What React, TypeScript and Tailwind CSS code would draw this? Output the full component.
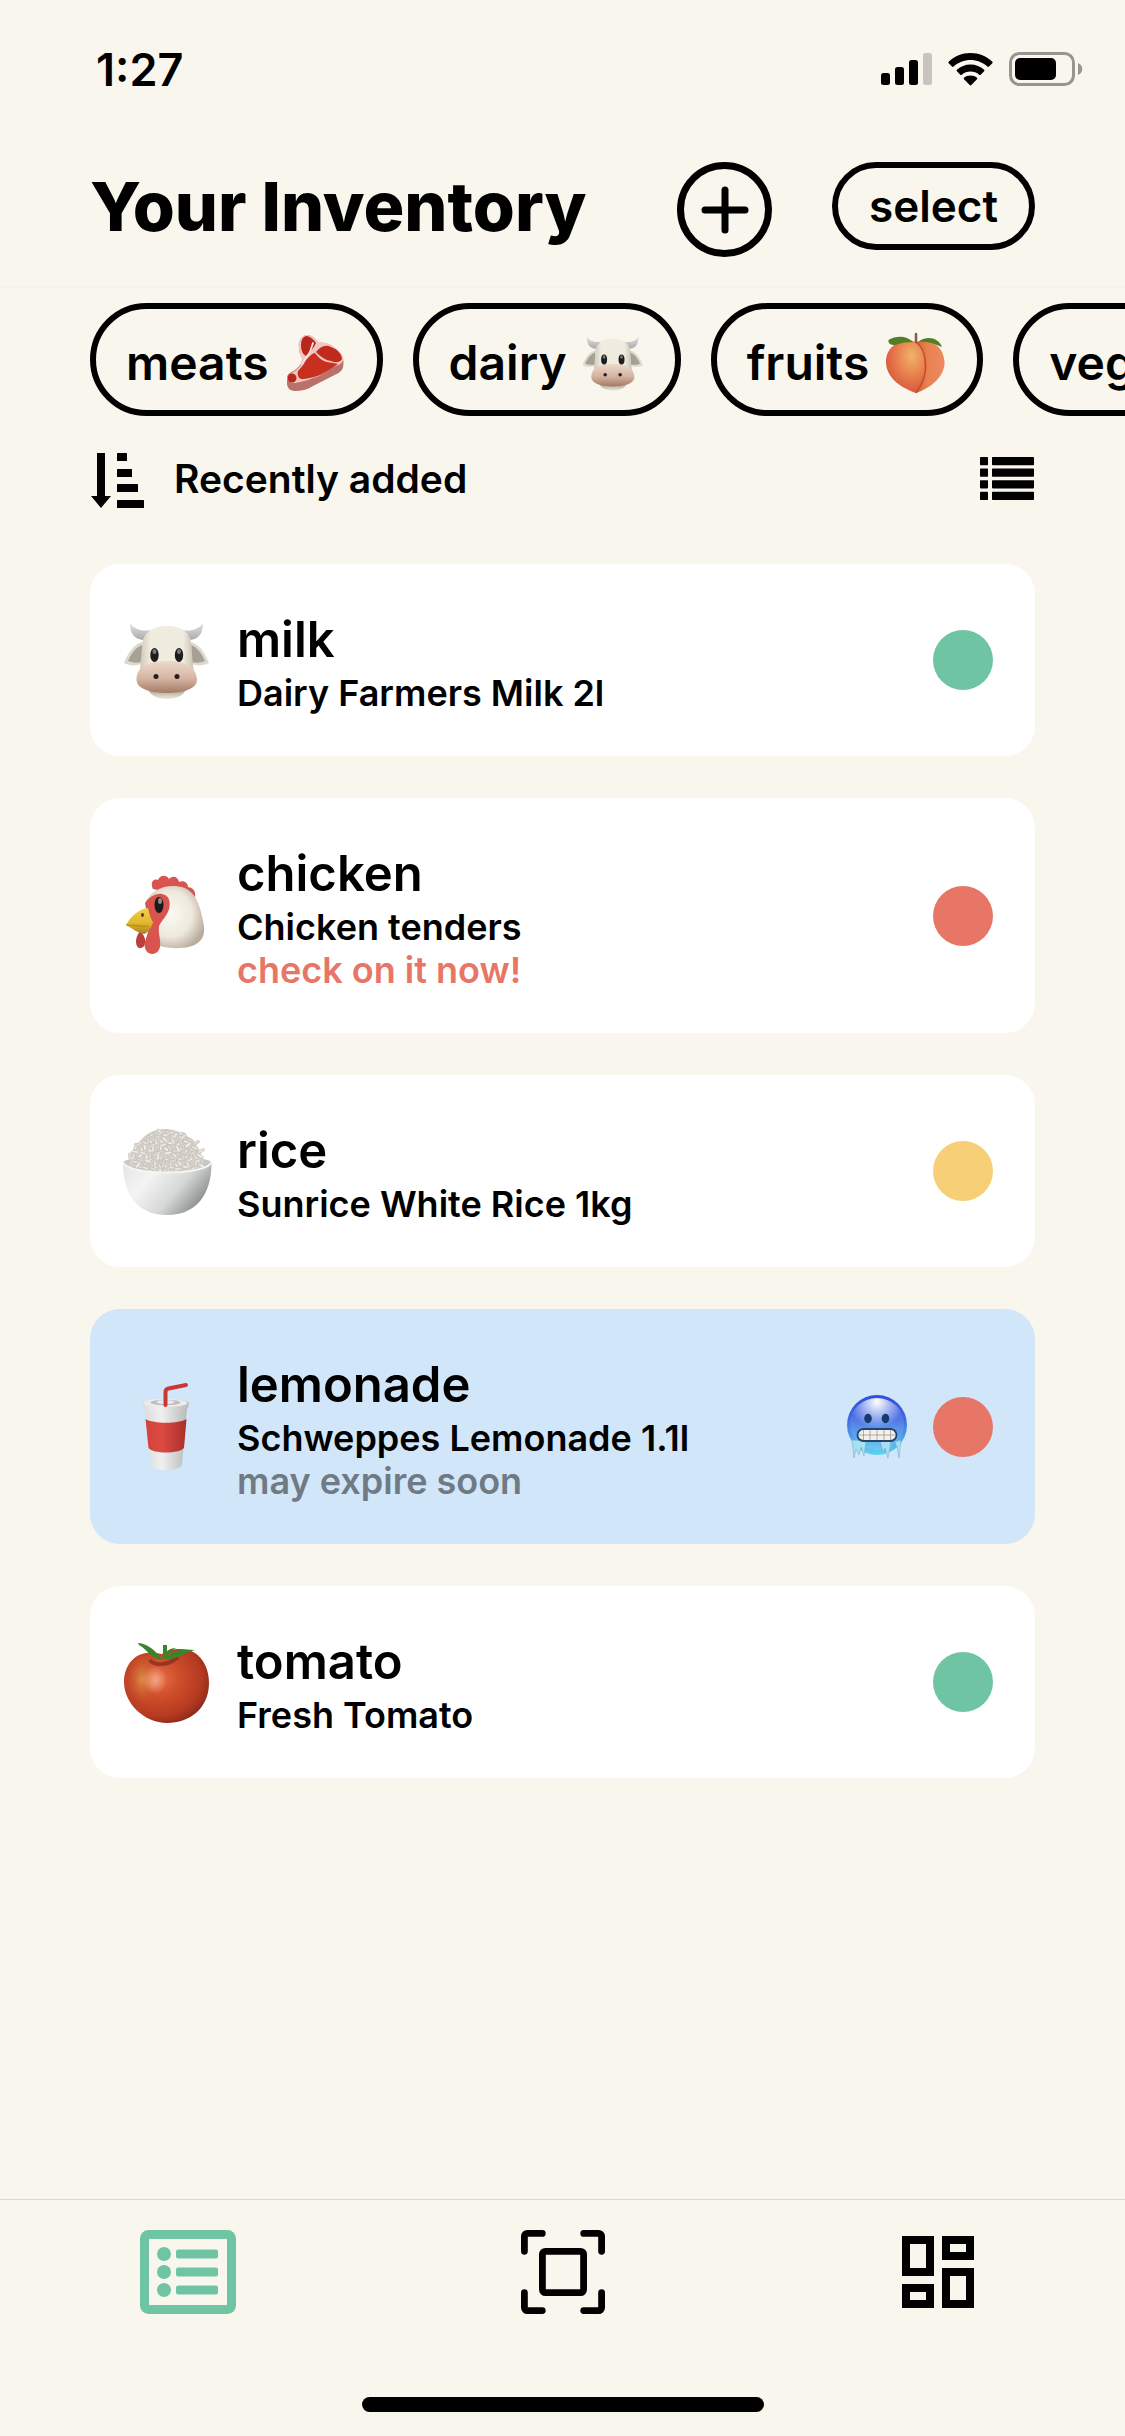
import type { ReactNode } from "react";

/* ---------- Status bar icons ---------- */

function SignalIcon() {
  return (
    <svg width="51" height="33" viewBox="0 0 51 33" aria-hidden="true">
      <rect x="0" y="20" width="9" height="12" rx="2.5" />
      <rect x="14" y="14" width="9" height="18" rx="2.5" />
      <rect x="28" y="7" width="9" height="25" rx="2.5" />
      <rect x="42" y="0" width="9" height="32" rx="2.5" fill="#c7c5be" />
    </svg>
  );
}

function WifiIcon() {
  return (
    <svg width="45" height="33" viewBox="0 0 45 33" aria-hidden="true">
      <path d="M22.5 0C31 0 38.500 3.300 44.300 8.700c.5.500.5 1.100 0 1.600l-3.300 3.300c-.5.500-1.100.5-1.600 0C34.800 9.400 29 7 22.500 7S10.200 9.400 5.600 13.600c-.5.500-1.100.5-1.600 0L.7 10.300c-.5-.5-.5-1.100 0-1.600C6.500 3.300 14 0 22.500 0z" />
      <path d="M22.500 11.500c5.200 0 10 2 13.600 5.200.5.500.5 1.100 0 1.600l-3.400 3.400c-.5.500-1 .5-1.500 0-2.400-2-5.400-3.200-8.700-3.200s-6.300 1.200-8.700 3.200c-.5.500-1 .5-1.500 0l-3.400-3.400c-.5-.5-.5-1.100 0-1.600 3.600-3.200 8.400-5.200 13.600-5.200z" />
      <path d="M22.500 22.500c2.600 0 4.800.8 6.500 2.200.5.500.5 1.100 0 1.600l-5.700 5.800c-.5.500-1.100.5-1.600 0L16 26.300c-.5-.5-.5-1.100 0-1.600 1.700-1.400 3.900-2.200 6.500-2.200z" />
    </svg>
  );
}

function BatteryIcon() {
  return (
    <svg width="74" height="35" viewBox="0 0 74 35" aria-hidden="true">
      <rect x="1.500" y="1.500" width="63" height="31" rx="9" fill="none" stroke="#97958f" strokeWidth="3" />
      <rect x="6" y="6" width="41" height="22" rx="5" />
      <path d="M69 11c2.600 1 4.200 3.300 4.200 6s-1.600 5-4.200 6z" fill="#97958f" />
    </svg>
  );
}

/* ---------- Toolbar icons ---------- */

function PlusIcon() {
  return (
    <svg width="48" height="48" viewBox="0 0 48 48" fill="none" stroke="currentColor" strokeWidth="7" strokeLinecap="round" aria-hidden="true">
      <path d="M24 4v40M4 24h40" />
    </svg>
  );
}

function SortIcon() {
  return (
    <svg width="54" height="59" viewBox="0 0 54 59" aria-hidden="true">
      <path d="M7 4h8v43h6L11 59 1 47h6z" />
      <rect x="27" y="4" width="10" height="8" rx="0.5" />
      <rect x="27" y="20" width="15" height="8" rx="0.5" />
      <rect x="27" y="35" width="21" height="8" rx="0.5" />
      <rect x="27" y="51" width="27" height="8" rx="0.5" />
    </svg>
  );
}

function RowsIcon() {
  return (
    <svg width="55" height="43" viewBox="0 0 55 43" aria-hidden="true">
      {[0, 11.6, 23.2, 34.8].map((y) => (
        <g key={y}>
          <rect x="0" y={y} width="8" height="8.200" rx="0.8" />
          <rect x="12" y={y} width="42" height="8.200" rx="0.8" />
        </g>
      ))}
    </svg>
  );
}

/* ---------- Tab bar icons ---------- */

function ListTabIcon() {
  return (
    <svg width="96" height="84" viewBox="0 0 96 84" fill="currentColor" aria-hidden="true">
      <rect x="4.500" y="4.500" width="87" height="75" rx="4" fill="none" stroke="currentColor" strokeWidth="9" />
      {[24, 42, 60].map((y) => (
        <g key={y}>
          <circle cx="24" cy={y} r="7" />
          <rect x="36" y={y - 4.5} width="42" height="9" rx="2" />
        </g>
      ))}
    </svg>
  );
}

function ScanTabIcon() {
  return (
    <svg width="84" height="84" viewBox="0 0 84 84" fill="none" stroke="currentColor" strokeWidth="6.800" strokeLinecap="round" aria-hidden="true">
      <path d="M3.400 21.300V6.400a3 3 0 0 1 3-3h14.900M62.700 3.400h14.900a3 3 0 0 1 3 3v14.900M80.600 62.700v14.900a3 3 0 0 1-3 3H62.700M21.300 80.600H6.400a3 3 0 0 1-3-3V62.700" />
      <rect x="21.400" y="21.400" width="41.200" height="41.200" rx="3" />
    </svg>
  );
}

function DashboardTabIcon() {
  return (
    <svg width="72" height="72" viewBox="0 0 72 72" fill="none" stroke="currentColor" strokeWidth="8" aria-hidden="true">
      <rect x="4" y="4" width="24" height="32" />
      <rect x="4" y="52" width="24" height="16" />
      <rect x="44" y="4" width="24" height="16" />
      <rect x="44" y="36" width="24" height="32" />
    </svg>
  );
}

/* ---------- Food pictures ---------- */

function Cow({ size }: { size: number }) {
  const id = `cow${size}`;
  return (
    <svg width={size} height={size} viewBox="0 0 90 90" role="img" aria-label="cow">
      <defs>
        <linearGradient id={`${id}head`} x1="0" x2="1">
          <stop offset="0" stopColor="#cfc9bb" />
          <stop offset="0.2" stopColor="#f0ecdf" />
          <stop offset="0.8" stopColor="#f0ecdf" />
          <stop offset="1" stopColor="#c9c3b4" />
        </linearGradient>
        <linearGradient id={`${id}nose`} x1="0" y1="0" x2="0" y2="1">
          <stop offset="0" stopColor="#eddacd" />
          <stop offset="0.55" stopColor="#d5b4a2" />
          <stop offset="1" stopColor="#a47a64" />
        </linearGradient>
        <linearGradient id={`${id}horn`} x1="0" y1="0" x2="0" y2="1">
          <stop offset="0" stopColor="#e4e4e4" />
          <stop offset="1" stopColor="#a9a9a9" />
        </linearGradient>
        <linearGradient id={`${id}chin`} x1="0" y1="0" x2="0" y2="1">
          <stop offset="0.7" stopColor="#bdb6a5" />
          <stop offset="1" stopColor="#eeeadd" />
        </linearGradient>
      </defs>
      <path d="M8 8c0 9 3 16 13 17l8-10C20 17 12 14 8 8zM81 8c0 9-3 16-13 17l-8-10c9 2 17-1 21-7z" fill={`url(#${id}horn)`} />
      <path d="M20 27C11 30 6 38 2 48c5 3 12 3 18 1zM69 27c9 3 14 11 18 21-5 3-12 3-18 1z" fill="#dedacb" />
      <path d="M20 30c-7 3-11 9-14 16 5 2 9 2 14 1zM69 30c7 3 11 9 14 16-5 2-9 2-14 1z" fill="#a5a194" />
      <ellipse cx="45" cy="73" rx="19" ry="11" fill={`url(#${id}chin)`} />
      <path d="M45 11c16 0 24 7 24.500 20 .5 8 1 14 2 24H18c1-10 1.500-16 2-24C20.500 18 29 11 45 11z" fill={`url(#${id}head)`} />
      <path d="M45 46c18 0 29 5 30 18 .7 10-14 14-30 14S14 74 14.500 64C15 51 27 46 45 46z" fill={`url(#${id}nose)`} />
      <ellipse cx="32.500" cy="40" rx="4.200" ry="7" fill="#1c1c1c" />
      <ellipse cx="57" cy="40" rx="4.200" ry="7" fill="#1c1c1c" />
      <ellipse cx="32.500" cy="36.500" rx="2" ry="2.500" fill="#777" />
      <ellipse cx="57" cy="36.500" rx="2" ry="2.500" fill="#777" />
      <circle cx="34" cy="61.500" r="2.500" fill="#2a1c18" />
      <circle cx="55" cy="61.500" r="2.500" fill="#2a1c18" />
    </svg>
  );
}

function Chicken() {
  return (
    <svg width="90" height="90" viewBox="0 0 90 90" role="img" aria-label="chicken">
      <defs>
        <radialGradient id="henHead" cx="0.42" cy="0.45" r="0.62">
          <stop offset="0" stopColor="#fdfaf2" />
          <stop offset="0.6" stopColor="#eee8dd" />
          <stop offset="1" stopColor="#b9ac9c" />
        </radialGradient>
        <linearGradient id="henBeak" x1="0" y1="0" x2="0" y2="1">
          <stop offset="0" stopColor="#f0cf4c" />
          <stop offset="0.55" stopColor="#e3b92f" />
          <stop offset="1" stopColor="#a9811d" />
        </linearGradient>
      </defs>
      <path d="M31 18c-3-6 0-11 5-9 2-5 8-6 11-1 4-4 9-2 10 3 5-2 9 1 9 5 6 1 8 5 7 11z" fill="#d9534f" />
      <path d="M24 31c4-10 15-16 27-16 17 0 24 10 28 26 3 13 6 23-2 30-8 7-24 7-35 5C29 74 25 62 24 50z" fill="url(#henHead)" />
      <path d="M18 60c-4 5-5 11-3 15 2 4 7 2 8-2 1-5-1-9-5-13z" fill="#b9403e" />
      <path d="M23 32c4-6 11-10 17-9 7 1 9 8 7 15-2 7-7 11-10 17-1 8 2 14 1 21-2 9-13 9-15 1-2-7 5-16 4-24z" fill="#d9534f" />
      <path d="M4 54c6-10 13-16 22-17 1 6 3 11 5 14-1 5-5 11-9 12-6-1-11-5-18-9z" fill="url(#henBeak)" />
      <path d="M4 54c8 0 16 2 22 1" fill="none" stroke="#b58a1e" strokeWidth="1.200" />
      <ellipse cx="20.500" cy="44" rx="1.400" ry="2" fill="#59310f" />
      <ellipse cx="37" cy="34" rx="4.500" ry="8" fill="#1b1b1b" />
      <ellipse cx="38" cy="30" rx="2" ry="3" fill="#8a8a8a" />
    </svg>
  );
}

/* Grains are scattered over the mound on a jittered grid. */
const grains = Array.from({ length: 204 }, (_, i) => {
  const row = Math.floor(i / 17);
  const col = i % 17;
  const x = 6 + col * 5 + ((i * 37) % 5);
  const y = 3 + row * 4 + ((i * 23) % 5);
  return { x, y, turn: (i * 67) % 180, shade: i % 3 };
}).filter(({ x, y }) => ((x - 45) / 37) ** 2 + ((y - 38) / 34) ** 2 < 1);

function Rice() {
  return (
    <svg width="90" height="90" viewBox="0 0 90 90" role="img" aria-label="rice">
      <defs>
        <linearGradient id="bowl" x1="0" y1="0" x2="1" y2="0.5">
          <stop offset="0" stopColor="#e2e4e5" />
          <stop offset="0.35" stopColor="#f4f4f4" />
          <stop offset="0.7" stopColor="#d6d7d7" />
          <stop offset="1" stopColor="#8f9192" />
        </linearGradient>
      </defs>
      <path d="M1 36c10-8 78-8 88.500 0L84 46H6z" fill="#c9c7c4" />
      <path d="M7 40c2-13 8-24 16-30C29 5 36 3 43 3c10 0 20 4 27 11 7 7 11 16 12 27L45 50z" fill="#d6d2cb" />
      {grains.map((g, i) => (
        <ellipse
          key={i}
          cx={g.x}
          cy={g.y}
          rx="4"
          ry="1.500"
          fill={["#e9e6e0", "#dedad3", "#f0ede8"][g.shade]}
          stroke="#b9b4ab"
          strokeWidth="0.500"
          transform={`rotate(${g.turn} ${g.x} ${g.y})`}
        />
      ))}
      <path d="M1 36c4 14 84 14 88.500 0 .5 24-9 53-44.500 53S.5 60 1 36z" fill="url(#bowl)" />
      <path d="M1 36c4 14 84 14 88.500 0" fill="none" stroke="#f3f6f7" strokeWidth="2" />
    </svg>
  );
}

function Drink() {
  return (
    <svg width="90" height="90" viewBox="0 0 90 90" role="img" aria-label="cup with straw">
      <defs>
        <linearGradient id="cup" x1="0" x2="1">
          <stop offset="0" stopColor="#dcdcdc" />
          <stop offset="0.4" stopColor="#f0f0f0" />
          <stop offset="1" stopColor="#b9b9b9" />
        </linearGradient>
        <linearGradient id="sleeve" x1="0" x2="1">
          <stop offset="0" stopColor="#d3413c" />
          <stop offset="0.4" stopColor="#dc4a43" />
          <stop offset="1" stopColor="#a92e2b" />
        </linearGradient>
      </defs>
      <path d="M23 26h42l-5 56c-1 8-30 8-31 0z" fill="url(#cup)" />
      <path d="M23.500 37c8 5 33 5 41 0l-2.500 29c-5 6-31 6-35.500 0z" fill="url(#sleeve)" />
      <path d="M20 21c0-5 47-5 47 0l-1 5c-4 6-41 6-45 0z" fill="url(#cup)" />
      <ellipse cx="43.500" cy="21" rx="22" ry="4" fill="#ececec" />
      <ellipse cx="43.500" cy="20.500" rx="15" ry="2.800" fill="#bdbdbd" />
      <ellipse cx="43.500" cy="20" rx="9" ry="2" fill="#e9e9e9" />
      <path d="M43.500 23V10c0-2 1-3 3-3.500L64 3" fill="none" stroke="#cc3733" strokeWidth="4" strokeLinecap="round" strokeLinejoin="round" />
    </svg>
  );
}

function Tomato() {
  return (
    <svg width="90" height="90" viewBox="0 0 90 90" role="img" aria-label="tomato">
      <defs>
        <radialGradient id="tomatoSkin" cx="0.4" cy="0.4" r="0.68">
          <stop offset="0" stopColor="#e8704a" />
          <stop offset="0.35" stopColor="#d04f2c" />
          <stop offset="0.75" stopColor="#b53a20" />
          <stop offset="1" stopColor="#84261a" />
        </radialGradient>
        <radialGradient id="tomatoGlow" cx="0.5" cy="0.5" r="0.5">
          <stop offset="0" stopColor="#dc944a" stopOpacity="0.9" />
          <stop offset="1" stopColor="#c8602c" stopOpacity="0" />
        </radialGradient>
        <radialGradient id="tomatoShine" cx="0.5" cy="0.5" r="0.5">
          <stop offset="0" stopColor="#f3ab88" stopOpacity="0.9" />
          <stop offset="1" stopColor="#f3ab88" stopOpacity="0" />
        </radialGradient>
      </defs>
      <path d="M40 17c8-6 24-7 33-1 9 6 14 17 14 30 0 25-19 40-42 40C22 86 2 66 2 45 2 27 15 10 40 17z" fill="url(#tomatoSkin)" />
      <ellipse cx="20" cy="42" rx="15" ry="24" fill="url(#tomatoGlow)" />
      <ellipse cx="33" cy="43" rx="12" ry="14" fill="url(#tomatoShine)" />
      <path d="M28 23c4 6 18 6 28-3" fill="none" stroke="#74211a" strokeWidth="4" opacity="0.6" />
      <path d="M16 6c7 0 14 5 22 13l2 4c-10 0-14-10-23-15zM41 8h4v12l-4 3zM44 22c5-8 14-11 29-9-10 2-17 10-29 9zM40 20c4-6 8-9 14-9-5 3-8 6-10 11z" fill="#3c8429" />
    </svg>
  );
}

function ColdFace() {
  return (
    <svg width="60" height="64" viewBox="0 0 60 64" role="img" aria-label="frozen">
      <defs>
        <linearGradient id="ice" x1="0" y1="0" x2="0" y2="1">
          <stop offset="0" stopColor="#2e4fdc" />
          <stop offset="0.4" stopColor="#3f68e2" />
          <stop offset="1" stopColor="#5fd4f2" />
        </linearGradient>
        <radialGradient id="iceShine" cx="0.5" cy="0.08" r="0.5">
          <stop offset="0" stopColor="#fff" />
          <stop offset="1" stopColor="#fff" stopOpacity="0.1" />
        </radialGradient>
      </defs>
      <circle cx="30" cy="30" r="30" fill="url(#ice)" />
      <ellipse cx="30" cy="29" rx="27" ry="26" fill="url(#iceShine)" />
      <ellipse cx="21" cy="23.500" rx="3.800" ry="4.700" fill="#173a6e" />
      <ellipse cx="38.500" cy="23.500" rx="3.800" ry="4.700" fill="#173a6e" />
      <path d="M5 45l2 18 2-9 3 6 2-8 3 9 2-15zM33 45l3 12 2-4 3 10 3-17zM48 47l2 5 2 11 2-18z" fill="#a9dff0" stroke="#6eaccb" strokeWidth="0.500" />
      <rect x="10.500" y="34" width="39" height="12" rx="6" fill="#f4f1ec" stroke="#24446b" strokeWidth="1.800" />
      <path d="M11 40h38M16.500 35v10M23 35v10M30 35v10M37 35v10M43.500 35v10" stroke="#9c9895" strokeWidth="0.800" />
    </svg>
  );
}

function Steak() {
  return (
    <svg width="64" height="64" viewBox="-3 -4 64 64" role="img" aria-label="steak">
      <path d="M13 13c-1-6 2-12 8-13 5 0 9 4 11 8 6 0 11 1 15 4 5 4 10 8 10.500 14 0 5 0 9-5 12L27 51c-6 4-12 5-18 5-5 0-8-3-8-8v-6c1-4 5-5 8-7 5-4 8-8 7-12-2-3-3-7-3-10z" fill="#bb716b" />
      <path d="M13 12c-1-6 2-12 8-12 5 0 9 4 11 7 6 0 11 1 15 4 5 4 10 8 10.500 13-1 6-7 6-12 9-6 4-11 8-18 10-6 2-12 4-18 5-4 0-8-1-8.500-5 1-4 5-5 8-7 5-4 8-8 7-12-2-3-3-8-3-12z" fill="#f0c6c1" />
      <path d="M15 10c0-5 2-9 6-9 4 1 7 4 9 7-2 5-6 9-10 13-4-2-5-7-5-11z" fill="#b9261a" />
      <path d="M30 17c4-5 9-8 15-5 6 2 11 7 11 12-2 4-7 4-11 2-6-1-10-4-15-9z" fill="#c02b1d" />
      <path d="M20 25c3-3 6-7 9-7 3 4 7 8 12 9 4 1 8 1 11 2-6 4-12 8-18 11-5 2-13 4-19 4-3-1-4-5-3-8 3-3 6-7 8-11z" fill="#c92f1f" />
      <circle cx="6" cy="43" r="4.500" fill="#b9261a" />
      <path d="M27 8l-3 9-8 12" fill="none" stroke="#f8dfdc" strokeWidth="1.800" strokeLinecap="round" />
    </svg>
  );
}

function Peach() {
  return (
    <svg width="64" height="64" viewBox="-2 -2 64 64" role="img" aria-label="peach">
      <defs>
        <radialGradient id="peachSkin" cx="0.65" cy="0.3" r="0.75">
          <stop offset="0" stopColor="#efb36b" />
          <stop offset="0.5" stopColor="#e87f4d" />
          <stop offset="1" stopColor="#d6523a" />
        </radialGradient>
        <linearGradient id="peachSide" x1="0" x2="1">
          <stop offset="0" stopColor="#cf6236" />
          <stop offset="0.4" stopColor="#ea8250" />
          <stop offset="1" stopColor="#ec8a64" />
        </linearGradient>
      </defs>
      <path d="M31 9c13-4 28 3 28.500 20C60 45 43 56 31 60z" fill="url(#peachSide)" />
      <path d="M31 9C18 4 1 12 1 29c0 17 18 27 30 31 8-11 11-23 9-34-1-8-4-13-9-17z" fill="url(#peachSkin)" />
      <path d="M31 9c5 4 8 9 9 17 2 11-1 23-9 34" fill="none" stroke="#bf4e2f" strokeWidth="1.500" />
      <path d="M3.500 7C12 2 22 3 28 9c-7 0-12 1-18 3-4 0-7-1-6.500-5zM33 9c7-6 20-6 24 5-8-3-14-6-24-5z" fill="#527f26" />
      <path d="M31 1v8" stroke="#8b5a48" strokeWidth="2.500" strokeLinecap="round" />
    </svg>
  );
}

/* ---------- Data ---------- */

const categories: { name: string; picture?: ReactNode }[] = [
  { name: "meats", picture: <Steak /> },
  { name: "dairy", picture: <Cow size={64} /> },
  { name: "fruits", picture: <Peach /> },
  { name: "vegetables" },
];

type Item = {
  name: string;
  detail: string;
  picture: ReactNode;
  dot: string;
  dotLabel: string;
  note?: string;
  noteColor?: string;
  frozen?: boolean;
};

const items: Item[] = [
  { name: "milk", detail: "Dairy Farmers Milk 2l", picture: <Cow size={90} />, dot: "bg-[#6fc5a3]", dotLabel: "fresh" },
  {
    name: "chicken",
    detail: "Chicken tenders",
    picture: <Chicken />,
    dot: "bg-[#e77666]",
    dotLabel: "expired",
    note: "check on it now!",
    noteColor: "text-[#e77666]",
  },
  { name: "rice", detail: "Sunrice White Rice 1kg", picture: <Rice />, dot: "bg-[#f6cf76]", dotLabel: "use soon" },
  {
    name: "lemonade",
    detail: "Schweppes Lemonade 1.1l",
    picture: <Drink />,
    dot: "bg-[#e77666]",
    dotLabel: "expired",
    note: "may expire soon",
    noteColor: "text-[#6f7a85]",
    frozen: true,
  },
  { name: "tomato", detail: "Fresh Tomato", picture: <Tomato />, dot: "bg-[#6fc5a3]", dotLabel: "fresh" },
];

/* ---------- Page ---------- */

function ItemCard({ item }: { item: Item }) {
  return (
    <li
      className={`flex items-center rounded-[30px] py-[41px] pr-[42px] pl-8 ${
        item.frozen ? "bg-[#d2e6f9]" : "bg-white"
      }`}
    >
      <div className="shrink-0">{item.picture}</div>
      <div className="ml-[25px] min-w-0 flex-1 pt-[2px]">
        <h2 className="text-[49px] leading-[65px] font-semibold">{item.name}</h2>
        <p className="text-[36px] leading-[43px] font-semibold">{item.detail}</p>
        {item.note && <p className={`text-[36px] leading-[43px] font-semibold ${item.noteColor}`}>{item.note}</p>}
      </div>
      <div className="flex shrink-0 items-center gap-[26px]">
        {item.frozen && <ColdFace />}
        <span role="img" aria-label={item.dotLabel} className={`size-[60px] rounded-full ${item.dot}`} />
      </div>
    </li>
  );
}

export default function App() {
  return (
    <div className="flex min-h-screen flex-col overflow-hidden bg-[#f9f6ee] font-['Inter',sans-serif] text-black">
      <div className="flex h-[138px] items-center justify-between pr-[42px] pl-24">
        <span className="text-[45px] leading-none font-semibold">1:27</span>
        <div className="flex items-center gap-4">
          <SignalIcon />
          <WifiIcon />
          <BatteryIcon />
        </div>
      </div>

      <header className="flex h-[150px] items-start border-b border-[#f5f2ea] px-[90px] pt-6">
        <h1 className="text-[68px] leading-[88px] font-extrabold whitespace-nowrap">Your Inventory</h1>
        <button
          type="button"
          aria-label="Add item"
          className="ml-auto flex size-[95px] shrink-0 items-center justify-center rounded-full border-[7px] border-black"
        >
          <PlusIcon />
        </button>
        <button
          type="button"
          className="ml-[60px] h-[88px] shrink-0 rounded-full border-[6px] border-black px-[31px] text-[44px] leading-none font-semibold"
        >
          select
        </button>
      </header>

      <nav aria-label="Categories" className="flex gap-[30px] overflow-hidden pt-[15px] pl-[90px]">
        {categories.map((category) => (
          <button
            key={category.name}
            type="button"
            className="flex h-[113px] shrink-0 items-center gap-[14px] rounded-full border-[6px] border-black px-[30px] pt-[6px] text-[48px] leading-none font-semibold"
          >
            {category.name}
            {category.picture}
          </button>
        ))}
      </nav>

      <div className="mt-[33px] flex items-center justify-between px-[90px]">
        <button type="button" className="flex items-center gap-[30px] text-[39px] leading-none font-semibold">
          <SortIcon />
          Recently added
        </button>
        <button type="button" aria-label="List view">
          <RowsIcon />
        </button>
      </div>

      <main className="px-[90px] pt-14 pb-10">
        <ul className="flex flex-col gap-[42px]">
          {items.map((item) => (
            <ItemCard key={item.name} item={item} />
          ))}
        </ul>
      </main>

      <footer className="mt-auto border-t border-[#dad8d0] pt-[30px] pb-6">
        <nav aria-label="Main" className="grid grid-cols-3 items-center justify-items-center">
          <button type="button" aria-label="Inventory" aria-current="page" className="text-[#6fc5a3]">
            <ListTabIcon />
          </button>
          <button type="button" aria-label="Scan">
            <ScanTabIcon />
          </button>
          <button type="button" aria-label="Dashboard">
            <DashboardTabIcon />
          </button>
        </nav>
        <div className="mx-auto mt-[83px] h-[15px] w-[402px] rounded-full bg-black" />
      </footer>
    </div>
  );
}
